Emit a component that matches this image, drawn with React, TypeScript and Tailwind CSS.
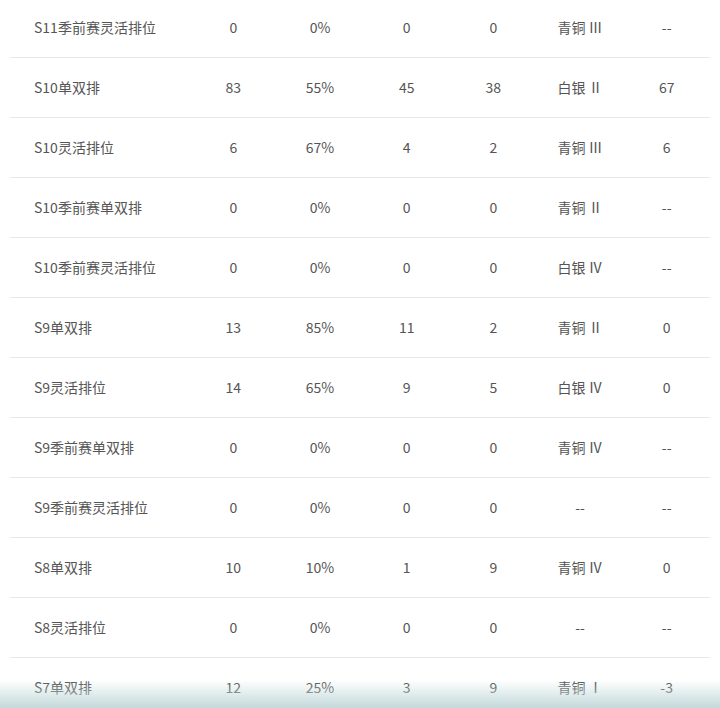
const rows = [
  ['S11季前赛灵活排位', '0', '0%', '0', '0', '青铜 Ⅲ', '--'],
  ['S10单双排', '83', '55%', '45', '38', '白银 Ⅱ', '67'],
  ['S10灵活排位', '6', '67%', '4', '2', '青铜 Ⅲ', '6'],
  ['S10季前赛单双排', '0', '0%', '0', '0', '青铜 Ⅱ', '--'],
  ['S10季前赛灵活排位', '0', '0%', '0', '0', '白银 Ⅳ', '--'],
  ['S9单双排', '13', '85%', '11', '2', '青铜 Ⅱ', '0'],
  ['S9灵活排位', '14', '65%', '9', '5', '白银 Ⅳ', '0'],
  ['S9季前赛单双排', '0', '0%', '0', '0', '青铜 Ⅳ', '--'],
  ['S9季前赛灵活排位', '0', '0%', '0', '0', '--', '--'],
  ['S8单双排', '10', '10%', '1', '9', '青铜 Ⅳ', '0'],
  ['S8灵活排位', '0', '0%', '0', '0', '--', '--'],
  ['S7单双排', '12', '25%', '3', '9', '青铜 Ⅰ', '-3'],
];

export default function App() {
  return (
    <div
      className="relative h-[708px] w-[720px] overflow-hidden bg-white text-[14px] text-[#555]"
      style={{ fontFamily: '"Noto Sans CJK SC", "Liberation Sans", sans-serif' }}
    >
      <div className="-mt-[2px] ml-[10px] w-[700px]">
        {rows.map((r) => (
          <div
            key={r[0]}
            className="grid h-[60px] grid-cols-[180px_repeat(6,1fr)] items-center border-b border-[#e8e8e8]"
          >
            <div className="pl-[24px]">{r[0]}</div>
            {r.slice(1).map((c, i) => (
              <div key={i} className="text-center">{c}</div>
            ))}
          </div>
        ))}
      </div>
      <div className="pointer-events-none absolute bottom-0 left-0 h-[28px] w-full bg-gradient-to-b from-white/0 to-[#c3d9da]" />
    </div>
  );
}
